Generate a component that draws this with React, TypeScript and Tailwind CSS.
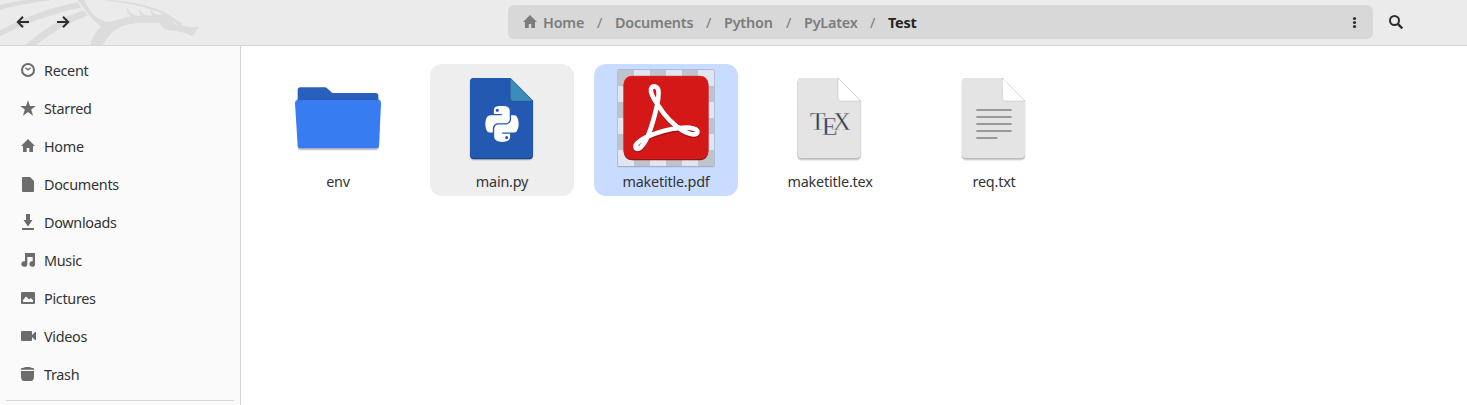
import type { ReactNode } from "react";

const HOME = "M8 1 L1 8 H3 V14 H6.7 V10 H9.3 V14 H13 V8 H15 Z";

const PYTHON =
  "M439.8 200.5c-7.7-30.9-22.3-54.2-53.4-54.2h-40.1v47.4c0 36.8-31.2 67.8-66.8 67.8H172.7c-29.2 0-53.4 25-53.4 54.3v101.8c0 29 25.2 46 53.4 54.3 33.8 9.9 66.3 11.7 106.8 0 26.9-7.8 53.4-23.5 53.4-54.3v-40.7H226.2v-13.6h160.2c31.1 0 42.6-21.7 53.4-54.2 11.2-33.5 10.7-65.7 0-108.6zM286.2 404c11.1 0 20.1 9.1 20.1 20.3 0 11.3-9 20.4-20.1 20.4-11 0-20.1-9.2-20.1-20.4.1-11.3 9.1-20.3 20.1-20.3zM167.8 248.1h106.8c29.7 0 53.4-24.5 53.4-54.3V91.9c0-29-24.4-50.7-53.4-55.6-35.8-5.9-74.7-5.6-106.8.1-45.2 8-53.4 24.7-53.4 55.6v40.7h106.9v13.6h-147c-31.1 0-58.3 18.7-66.8 54.2-9.8 40.7-10.2 66.1 0 108.6 7.6 31.6 25.7 54.2 56.8 54.2H101v-48.8c0-35.3 30.5-66.4 66.8-66.4zm-6.7-142.6c-11.1 0-20.1-9.1-20.1-20.3.1-11.3 9-20.4 20.1-20.4 11 0 20.1 9.2 20.1 20.4s-9 20.3-20.1 20.3z";

const ACROBAT =
  "M205 137 C191 117 180 99 183 87 C188 74 202 78 205 91 C208 104 204 126 196 158 C188 190 180 218 167 242 C157 260 146 271 138 265 C132 256 145 243 166 233 C192 221 230 207 270 204 C304 201 324 206 322 217 C319 228 297 223 278 212 C248 193 222 164 205 137 Z";

function Dragon() {
  return (
    <svg className="pointer-events-none absolute left-0 top-0" width="250" height="45" viewBox="0 0 750 135">
      <g fill="#dcdcdc" stroke="#d6d6d6" strokeWidth="1">
        <path d="M0 16 C30 8 60 3 85 0 H150 C100 6 40 18 0 28 Z" />
        <path d="M0 92 C70 54 150 24 232 8 L242 22 C160 38 70 72 0 108 Z" />
        <path d="M78 135 C130 88 190 52 250 32 L262 46 C205 68 150 100 108 135 Z" />
        <path d="M234 0 C252 22 270 54 303 79 C295 92 273 112 273 135 H307 C324 106 342 84 376 74 C410 64 450 70 480 68 C486 82 494 89 508 90 C540 92 555 98 578 108 L595 81 C578 85 560 82 543 75 L544 70 L500 41 C455 18 390 4 320 1 C390 8 445 22 492 41 C485 43 478 46 472 46 C463 42 456 36 451 30 C452 38 457 44 460 48 C446 49 440 48 436 46 C427 42 421 36 418 28 C417 38 420 44 426 48 C410 48 404 47 400 45 C390 40 386 34 382 25 C382 38 388 45 394 50 C365 54 340 68 320 66 C285 60 264 28 252 0 Z" />
      </g>
      <path d="M516 64 L530 74" stroke="#eee" strokeWidth="3" />
    </svg>
  );
}

type Place = { name: string; icon: ReactNode };

const places: Place[] = [
  { name: "Recent", icon: <><circle cx="8" cy="8" r="6" fill="none" stroke="currentColor" strokeWidth="2" /><path d="M5.3 5.8 L8 7.8 L10.7 5.8" fill="none" stroke="currentColor" strokeWidth="1.4" /></> },
  { name: "Starred", icon: <path d="M8 0.3 L10 6 H15.8 L11.2 9.5 L13 15.7 L8 12 L3 15.7 L4.8 9.5 L0.2 6 H6 Z" /> },
  { name: "Home", icon: <path d={HOME} /> },
  { name: "Documents", icon: <path d="M3 1 H10 L14 5 V15 Q14 16 13 16 H3 Q2 16 2 15 V2 Q2 1 3 1 Z" /> },
  { name: "Downloads", icon: <path d="M6 0 H10 V6 H12.5 L8 12.4 L3.5 6 H6 Z M2 14 H14 V16 H2 Z" /> },
  { name: "Music", icon: <path d="M5 1 H15 V12.2 A2.8 2.8 0 1 1 12.7 9.3 V5 H7.3 V12.2 A3 2.8 0 1 1 5 9.3 Z" /> },
  { name: "Pictures", icon: <path fillRule="evenodd" d="M2 2 H14 Q15 2 15 3 V13 Q15 14 14 14 H2 Q1 14 1 13 V3 Q1 2 2 2 Z M3 12 H13 V10 L10.8 8 L9.2 9.5 L6 6.5 L3 10 Z" /> },
  { name: "Videos", icon: <path d="M2 3 H11 Q12 3 12 4 V7 L15 4 H16 V12 H15 L12 9 V12 Q12 13 11 13 H2 Q1 13 1 12 V4 Q1 3 2 3 Z" /> },
  { name: "Trash", icon: <path d="M1 3.7 V2.3 Q4 2 5.5 1 H9.5 Q11 2 14 2.3 V3.7 Z M1 5 H14 V11 Q13.6 15 11 15 H4 Q1.4 15 1 11 Z" /> },
];

function Sidebar() {
  return (
    <aside className="flex w-[241px] shrink-0 flex-col border-r border-[#d5d5d5] bg-[#fafafa] pt-[5px] tracking-[-0.3px]">
      {places.map((p) => (
        <div key={p.name} className="flex h-[38px] shrink-0 items-center gap-2 pl-5 text-[#333]">
          <svg width="16" height="16" viewBox="0 0 16 16" className="shrink-0 text-[#6c6c6c]" fill="currentColor">{p.icon}</svg>
          <span className="pt-0.5">{p.name}</span>
        </div>
      ))}
      <div className="mx-1.5 mt-[7px] h-px shrink-0 bg-[#d9d9d9]" />
    </aside>
  );
}

function Sheet({ x, fill, edge, fold }: { x: number; fill: string; edge: string; fold: string }) {
  return (
    <>
      <path d={`M${x + 12} 58 H${x + 121} L${x + 189} 126 V286 Q${x + 189} 300 ${x + 177} 300 H${x + 12} Q${x} 300 ${x} 286 V70 Q${x} 58 ${x + 12} 58 Z`} fill="#00000018" stroke="#00000018" strokeWidth="4" />
      <path d={`M${x + 12} 54 H${x + 121} L${x + 189} 122 V286 Q${x + 189} 298 ${x + 177} 298 H${x + 12} Q${x} 298 ${x} 286 V66 Q${x} 54 ${x + 12} 54 Z`} fill={edge} />
      <path d={`M${x + 12} 54 H${x + 121} L${x + 189} 122 V282 Q${x + 189} 294 ${x + 177} 294 H${x + 12} Q${x} 294 ${x} 282 V66 Q${x} 54 ${x + 12} 54 Z`} fill={fill} />
      <path d={`M${x + 121} 54 V113 Q${x + 121} 123 ${x + 132} 123 H${x + 189} Z`} fill={fold} stroke="#0000001c" strokeWidth="3" />
    </>
  );
}

function Folder() {
  return (
    <>
      <path d="M54 120 H302 L297 262 Q296 271 288 271 H62 Q54 271 53 262 Z" fill="#0000003a" />
      <path d="M53 125 V90 Q53 82 61 82 H134 Q139 82 143 86 L157 99 H287 Q295 99 295 107 V125 Z" fill="#2a60bd" />
      <path d="M53 119 H295 Q303 121 303 130 L297 258 Q296 265 289 265 H60 Q54 265 53 258 L45 130 Q45 121 53 119 Z" fill="#377cf1" />
      <path d="M53 118 H295" stroke="#2555a6" strokeWidth="2" />
    </>
  );
}

function Pdf() {
  const cells = Array.from({ length: 36 }, (_, i) => ({ c: i % 6, r: Math.floor(i / 6) }));
  return (
    <>
      <rect x="82" y="28" width="292" height="294" rx="5" fill="#a3b0cb" />
      <rect x="84" y="30" width="288" height="288" fill="#e0e5ef" />
      {cells.filter((k) => (k.c + k.r) % 2 === 0).map((k) => (
        <rect key={`${k.c}-${k.r}`} x={84 + k.c * 48} y={30 + k.r * 48} width="48" height="48" fill="#bfc3cc" />
      ))}
      <rect x="101" y="50" width="254" height="251" rx="25" fill="#8f1515" />
      <rect x="101" y="47" width="254" height="249" rx="25" fill="#e43a3a" />
      <rect x="101" y="49" width="254" height="248" rx="25" fill="#d41818" />
      <g fill="none" strokeLinecap="round" strokeLinejoin="round" strokeWidth="14">
        <path d={ACROBAT} stroke="#a51111" transform="translate(0 4)" />
        <path d={ACROBAT} stroke="#fff" />
      </g>
    </>
  );
}

function Tex() {
  return (
    <>
      <Sheet x={113} fill="#e4e4e4" edge="#bdbdbd" fold="#fff" />
      <text x="149" y="210" fill="#333744" stroke="#e4e4e4" strokeWidth="1.2" fontFamily="Liberation Serif, serif" fontSize="78">
        T<tspan dx="-11" dy="15">E</tspan><tspan dx="-14" dy="-15" fontSize="74">X</tspan>
      </text>
    </>
  );
}

const files = [
  { name: "env", box: "-42 12 432 324", tone: "bg-transparent", art: <Folder /> },
  { name: "main.py", box: "15 12 432 324", tone: "bg-[#eeeeee]", art: <><Sheet x={135} fill="#2459b1" edge="#1b458b" fold="#3a8db9" /><path d={PYTHON} fill="#fff" transform="translate(181 130.3) scale(0.2232 0.241)" /></> },
  { name: "maketitle.pdf", box: "12 12 432 324", tone: "bg-[#c7dcff]", art: <Pdf /> },
  { name: "maketitle.tex", box: "-6 12 432 324", tone: "bg-transparent", art: <Tex /> },
  { name: "req.txt", box: "6 12 432 324", tone: "bg-transparent", art: <><Sheet x={126} fill="#e4e4e4" edge="#bdbdbd" fold="#fff" /><path d="M169 150 H275 M169 171 H275 M169 192 H275 M169 213 H275 M169 234 H232" stroke="#999" strokeWidth="6" /></> },
];

const crumbs = [
  { name: "Documents", width: "w-[78px]" },
  { name: "Python", width: "w-[49px]" },
  { name: "PyLatex", width: "w-[53px]" },
  { name: "Test", width: "w-[30px]" },
];

export default function App() {
  return (
    <div className="flex h-[405px] w-[1467px] flex-col overflow-hidden bg-white font-['Noto_Sans',sans-serif] text-[14.4px]">
      <header className="relative flex h-[46px] shrink-0 items-center border-b border-[#d5d5d5] bg-[#ebebeb] text-[#2e2e2e]">
        <Dragon />
        <div className="relative mb-px flex w-[508px] items-center gap-6 pl-[15px]">
          <svg width="16" height="16" viewBox="0 0 16 16" fill="none" stroke="currentColor" strokeWidth="2"><path d="M14 8 H3 M8 2.8 L2.8 8 L8 13.2" /></svg>
          <svg width="16" height="16" viewBox="0 0 16 16" fill="none" stroke="currentColor" strokeWidth="2"><path d="M2 8 H13 M8 2.8 L13.2 8 L8 13.2" /></svg>
        </div>
        <nav className="mb-px flex h-[34px] w-[865px] items-center rounded-md bg-[#d8d8d8] pl-[14px] font-semibold tracking-[-0.2px] text-[#7c7c7c]">
          <svg width="16" height="16" viewBox="0 0 16 16" fill="currentColor"><path d={HOME} /></svg>
          <span className="ml-[5px] w-[41px] pt-0.5">Home</span>
          {crumbs.map((c) => (
            <div key={c.name} className="flex pt-0.5">
              <span className="w-[31px] text-center font-normal">/</span>
              <span className={`${c.width} whitespace-nowrap ${c.name === "Test" ? "font-bold text-[#242424]" : ""}`}>{c.name}</span>
            </div>
          ))}
          <svg className="ml-auto mr-[10px] text-[#2e2e2e]" width="16" height="16" viewBox="0 0 16 16" fill="currentColor"><circle cx="7.5" cy="4.5" r="1.6" /><circle cx="7.5" cy="8.5" r="1.6" /><circle cx="7.5" cy="12.5" r="1.6" /></svg>
        </nav>
        <svg className="mb-px ml-[15px]" width="16" height="16" viewBox="0 0 16 16" fill="none" stroke="currentColor" strokeWidth="2"><circle cx="6.5" cy="6.5" r="4.5" /><path d="M9.8 9.8 L14.3 14.3" strokeWidth="2.4" /></svg>
      </header>
      <div className="flex min-h-0 flex-1">
        <Sidebar />
        <main className="flex flex-1 items-start gap-5 pl-[25px] pt-[18px] tracking-[-0.2px]">
          {files.map((f) => (
            <div key={f.name} className={`flex h-[132px] w-36 flex-col items-center rounded-xl text-[#333] ${f.tone}`}>
              <svg width="144" height="108" viewBox={f.box}>{f.art}</svg>
              <span className="leading-5">{f.name}</span>
            </div>
          ))}
        </main>
      </div>
    </div>
  );
}
